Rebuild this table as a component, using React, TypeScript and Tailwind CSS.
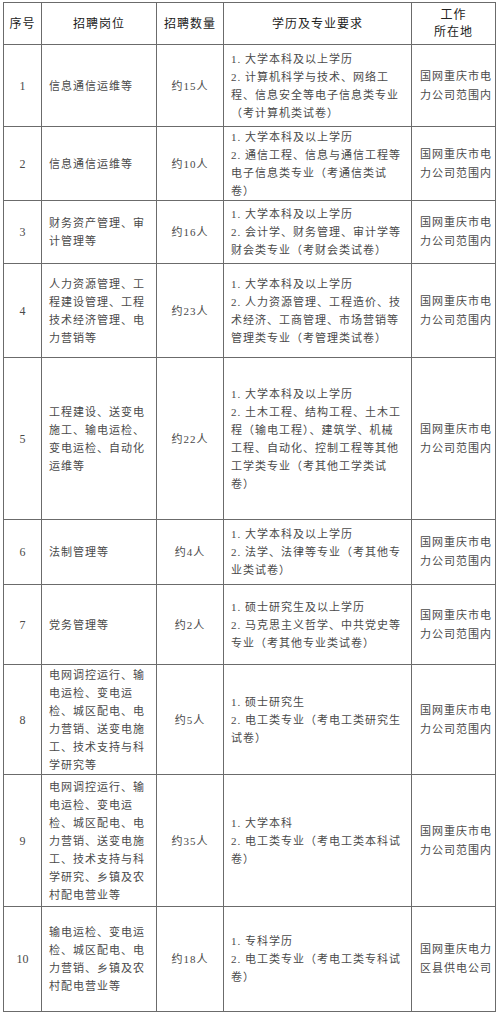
import * as React from 'react';

type Row = {
    no: string;
    pos: string[];
    num: string;
    req: string[];
    loc: string[];
    h: number;
};

const LOC = ['国网重庆市电', '力公司范围内'];

const rows: Row[] = [
    {
        no: '1',
        pos: ['信息通信运维等'],
        num: '约15人',
        req: ['1. 大学本科及以上学历', '2. 计算机科学与技术、网络工', '程、信息安全等电子信息类专业', '（考计算机类试卷）'],
        loc: LOC,
        h: 82,
    },
    {
        no: '2',
        pos: ['信息通信运维等'],
        num: '约10人',
        req: ['1. 大学本科及以上学历', '2. 通信工程、信息与通信工程等', '电子信息类专业（考通信类试', '卷）'],
        loc: LOC,
        h: 74,
    },
    {
        no: '3',
        pos: ['财务资产管理、审', '计管理等'],
        num: '约16人',
        req: ['1. 大学本科及以上学历', '2. 会计学、财务管理、审计学等', '财会类专业（考财会类试卷）'],
        loc: LOC,
        h: 63,
    },
    {
        no: '4',
        pos: ['人力资源管理、工', '程建设管理、工程', '技术经济管理、电', '力营销等'],
        num: '约23人',
        req: ['1. 大学本科及以上学历', '2. 人力资源管理、工程造价、技', '术经济、工商管理、市场营销等', '管理类专业（考管理类试卷）'],
        loc: LOC,
        h: 94,
    },
    {
        no: '5',
        pos: ['工程建设、送变电', '施工、输电运检、', '变电运检、自动化', '运维等'],
        num: '约22人',
        req: [
            '1. 大学本科及以上学历',
            '2. 土木工程、结构工程、土木工',
            '程（输电工程）、建筑学、机械',
            '工程、自动化、控制工程等其他',
            '工学类专业（考其他工学类试',
            '卷）',
        ],
        loc: LOC,
        h: 162,
    },
    {
        no: '6',
        pos: ['法制管理等'],
        num: '约4人',
        req: ['1. 大学本科及以上学历', '2. 法学、法律等专业（考其他专', '业类试卷）'],
        loc: LOC,
        h: 65,
    },
    {
        no: '7',
        pos: ['党务管理等'],
        num: '约2人',
        req: ['1. 硕士研究生及以上学历', '2. 马克思主义哲学、中共党史等', '专业（考其他专业类试卷）'],
        loc: LOC,
        h: 80,
    },
    {
        no: '8',
        pos: ['电网调控运行、输', '电运检、变电运', '检、城区配电、电', '力营销、送变电施', '工、技术支持与科', '学研究等'],
        num: '约5人',
        req: ['1. 硕士研究生', '2. 电工类专业（考电工类研究生', '试卷）'],
        loc: LOC,
        h: 110,
    },
    {
        no: '9',
        pos: ['电网调控运行、输', '电运检、变电运', '检、城区配电、电', '力营销、送变电施', '工、技术支持与科', '学研究、乡镇及农', '村配电营业等'],
        num: '约35人',
        req: ['1. 大学本科', '2. 电工类专业（考电工类本科试', '卷）'],
        loc: LOC,
        h: 132,
    },
    {
        no: '10',
        pos: ['输电运检、变电运', '检、城区配电、电', '力营销、乡镇及农', '村配电营业等'],
        num: '约18人',
        req: ['1. 专科学历', '2. 电工类专业（考电工类专科试', '卷）'],
        loc: ['国网重庆电力', '区县供电公司'],
        h: 105,
    },
];

const Lines: React.FC<{ lines: string[] }> = ({ lines }) => (
    <>
        {lines.map((l, i) => (
            <div key={i} className="whitespace-nowrap">
                {l}
            </div>
        ))}
    </>
);

const cell = 'border border-[#6b6b6b] align-middle p-0';

export default function App() {
    return (
        <div
            className="min-h-screen w-full bg-white pl-[3px] pt-[2px] text-[11px] leading-[18px] tracking-[1px] text-[#4a4a4a]"
            style={{ fontFamily: '"Liberation Serif", "Noto Sans CJK SC", serif' }}
        >
            <table className="w-[492px] table-fixed border-collapse">
                <colgroup>
                    <col className="w-[38px]" />
                    <col className="w-[115px]" />
                    <col className="w-[67px]" />
                    <col className="w-[188px]" />
                    <col className="w-[84px]" />
                </colgroup>
                <thead>
                    <tr className="h-[42px] text-[12px] text-[#222]">
                        <th className={`${cell} text-center font-normal`}>序号</th>
                        <th className={`${cell} text-center font-normal`}>招聘岗位</th>
                        <th className={`${cell} text-center font-normal`}>招聘数量</th>
                        <th className={`${cell} text-center font-normal`}>学历及专业要求</th>
                        <th className={`${cell} text-center font-normal leading-[17px]`}>
                            <div>工作</div>
                            <div>所在地</div>
                        </th>
                    </tr>
                </thead>
                <tbody>
                    {rows.map((r) => (
                        <tr key={r.no} style={{ height: r.h }}>
                            <td className={`${cell} text-center text-[12px] tracking-normal`}>{r.no}</td>
                            <td className={`${cell} pl-[7px]`}>
                                <Lines lines={r.pos} />
                            </td>
                            <td className={`${cell} text-center`}>{r.num}</td>
                            <td className={`${cell} pl-[7px]`}>
                                <Lines lines={r.req} />
                            </td>
                            <td className={`${cell} pl-[8px] leading-[19px]`}>
                                <Lines lines={r.loc} />
                            </td>
                        </tr>
                    ))}
                </tbody>
            </table>
        </div>
    );
}
